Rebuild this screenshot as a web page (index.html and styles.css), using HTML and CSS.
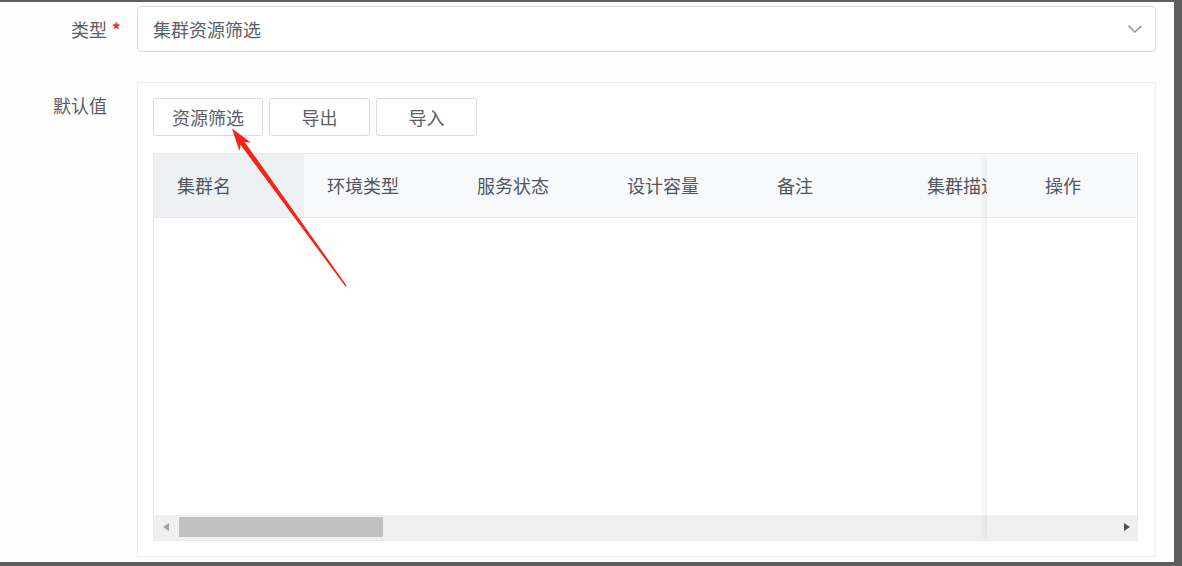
FILE: index.html
```html
<!DOCTYPE html>
<html lang="zh">
<head>
<meta charset="utf-8">
<title>表单</title>
<link rel="stylesheet" href="styles.css">
</head>
<body>
<div class="page">
  <div class="form">
    <div class="row">
      <div class="label label-mid">类型<span class="req">*</span></div>
      <div class="select">
        <span class="select-text">集群资源筛选</span>
        <svg class="chevron" width="16" height="10" viewBox="0 0 16 10"><path d="M1.5 1.8 L8 8 L14.5 1.8" fill="none" stroke="#8f99a8" stroke-width="1.6"/></svg>
      </div>
    </div>
    <div class="row row-gap">
      <div class="label label-top">默认值</div>
      <div class="panel">
        <div class="btns">
          <button class="btn">资源筛选</button>
          <button class="btn">导出</button>
          <button class="btn">导入</button>
        </div>
        <div class="table">
          <div class="thead">
            <div class="th th-first">集群名</div>
            <div class="th">环境类型</div>
            <div class="th">服务状态</div>
            <div class="th">设计容量</div>
            <div class="th">备注</div>
            <div class="th">集群描述</div>
          </div>
          <div class="tbody"></div>
          <div class="hscroll">
            <span class="arrow-left"></span>
            <span class="thumb"></span>
          </div>
          <div class="fixed-col">
            <div class="fixed-th">操作</div>
            <div class="fixed-body"></div>
            <div class="fixed-scroll"><span class="arrow-right"></span></div>
          </div>
        </div>
      </div>
    </div>
  </div>
  <svg class="annot" width="1182" height="566" viewBox="0 0 1182 566">
    <polygon points="232,128.5 250.7,142.6 244.7,142.0 346.6,285.5 345.4,286.5 240.7,145.0 239.4,150.9" fill="#f3241a"/>
  </svg>
</div>
</body>
</html>
```

FILE: styles.css
```css
* { box-sizing: border-box; }
html, body { margin: 0; padding: 0; }
body {
  width: 1182px;
  height: 566px;
  background: #5e5e5e;
  padding: 2px 8px 4px 0;
  font-family: "Noto Sans CJK SC", "Noto Sans", sans-serif;
  overflow: hidden;
}
.page {
  position: relative;
  width: 1174px;
  height: 560px;
  background: #fdfdfd;
}
.form {
  padding-top: 4px;
}
.row {
  display: flex;
}
.row-gap {
  margin-top: 30px;
}
.label {
  width: 137px;
  flex: none;
  font-size: 18px;
  color: #5a5e66;
  text-align: right;
  padding-right: 30px;
  position: relative;
}
.label-mid {
  line-height: 46px;
}
.label-top {
  line-height: 46px;
}
.req {
  position: absolute;
  left: 112px;
  top: 0;
  color: #f5222d;
  font-size: 17px;
  font-weight: bold;
}
.select {
  width: 1019px;
  height: 46px;
  border: 1px solid #d8dbe2;
  border-radius: 4px;
  background: #fff;
  display: flex;
  align-items: center;
  justify-content: space-between;
  padding: 0 12px 0 15px;
}
.select-text {
  font-size: 18px;
  color: #5a5e66;
}
.chevron {
  display: block;
}
.panel {
  width: 1019px;
  height: 475px;
  border: 1px solid #eceef2;
  background: #fff;
  padding: 15px 17px 15px 15px;
}
.btns {
  display: flex;
  gap: 6px;
}
.btn {
  height: 38px;
  min-width: 101px;
  padding: 0 18px;
  border: 1px solid #d8dbe2;
  border-radius: 3px;
  background: #fff;
  font-family: inherit;
  font-size: 18px;
  color: #5a5e66;
  line-height: 1;
}
.table {
  position: relative;
  margin-top: 17px;
  width: 985px;
  height: 388px;
  border: 1px solid #e8eaef;
  display: flex;
  flex-direction: column;
  overflow: hidden;
}
.thead {
  display: flex;
  height: 64px;
  flex: none;
  background: #f8f9fb;
  border-bottom: 1px solid #e4e7ed;
  overflow: hidden;
}
.th {
  width: 150px;
  flex: none;
  padding-left: 23px;
  font-size: 18px;
  color: #50555e;
  line-height: 62px;
  white-space: nowrap;
}
.th-first {
  background: #eef0f4;
}
.tbody {
  flex: 1;
  background: #fff;
}
.hscroll {
  position: relative;
  height: 25px;
  flex: none;
  background: #f0f0f0;
}
.arrow-left {
  position: absolute;
  left: 9px;
  top: 8px;
  width: 0;
  height: 0;
  border-top: 4.5px solid transparent;
  border-bottom: 4.5px solid transparent;
  border-right: 6px solid #a3a3a3;
}
.thumb {
  position: absolute;
  left: 25px;
  top: 2px;
  width: 204px;
  height: 20px;
  background: #c1c1c1;
}
.fixed-col {
  position: absolute;
  top: 0;
  right: 0;
  bottom: 0;
  width: 150px;
  display: flex;
  flex-direction: column;
  box-shadow: -4px 0 8px -2px rgba(0, 0, 0, 0.08);
}
.fixed-th {
  height: 64px;
  flex: none;
  background: #f8f9fb;
  border-bottom: 1px solid #e4e7ed;
  font-size: 18px;
  color: #50555e;
  line-height: 62px;
  text-align: center;
  padding-left: 2px;
}
.fixed-body {
  flex: 1;
  background: #fff;
}
.fixed-scroll {
  position: relative;
  height: 25px;
  flex: none;
  background: #f0f0f0;
}
.arrow-right {
  position: absolute;
  right: 7px;
  top: 8px;
  width: 0;
  height: 0;
  border-top: 4.5px solid transparent;
  border-bottom: 4.5px solid transparent;
  border-left: 6px solid #4f4f4f;
}
.annot {
  position: absolute;
  left: 0;
  top: -2px;
  pointer-events: none;
}
```
